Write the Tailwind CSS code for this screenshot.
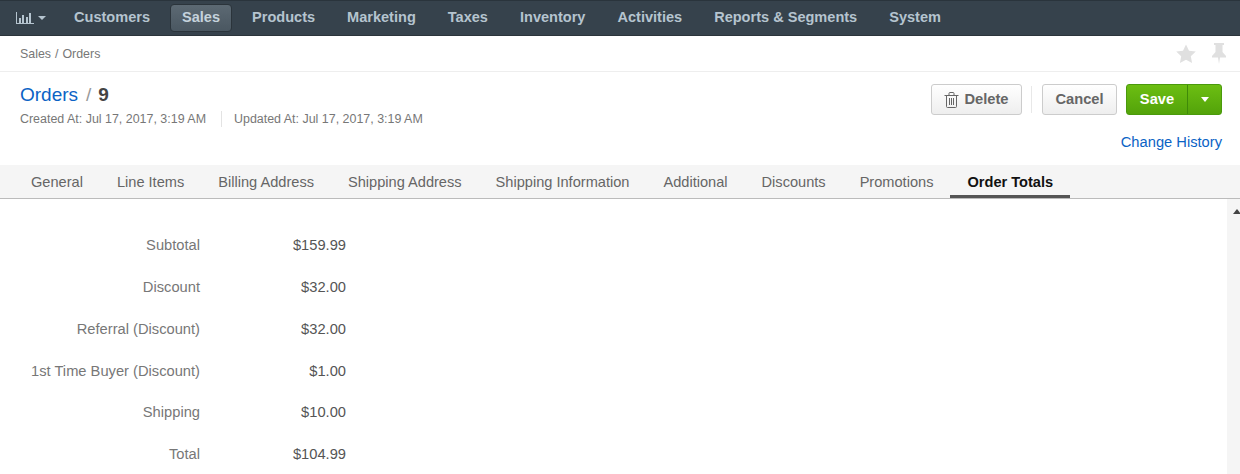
<!DOCTYPE html>
<html lang="en">

<head>
  <meta charset="UTF-8">
  <title>Orders / 9</title>
  <script src="https://cdn.jsdelivr.net/npm/@tailwindcss/browser@4"></script>
</head>

<body class="bg-white h-screen overflow-hidden font-['Liberation_Sans',Arial,sans-serif] text-[#333]">
  <!-- top nav -->
  <nav class="flex items-center h-[36px] pl-[6px] pb-[1px] bg-[#36424c] border-t border-t-[#2a343c] border-b border-b-[#2b343b] text-[14.550px] font-bold text-[#b5c4cf]">
    <a class="flex items-center gap-[4px] w-[56px] pl-[10px]">
      <svg width="18" height="12" viewBox="0 0 18 12" fill="#b5c4cf">
        <path d="M0 0h1v11h17v1H0z" />
        <path d="M3 6h2v5H3zM6 3h2v8H6zM10 5h2v6h-2zM13 1h2v10h-2z" />
      </svg>
      <span class="w-0 h-0 border-x-[4px] border-x-transparent border-t-[4px] border-t-[#b5c4cf]"></span>
    </a>
    <div class="flex items-center gap-[8px]">
      <a class="px-[12px]">Customers</a>
      <a class="px-[11px] mt-[1px] h-[28px] leading-[25px] rounded-[4px] text-[#c5d2dc] bg-gradient-to-b from-[#5c6973] to-[#4a5761] border border-[#2b343b]">Sales</a>
      <a class="px-[12px]">Products</a>
      <a class="px-[12px]">Marketing</a>
      <a class="px-[12px]">Taxes</a>
      <a class="px-[12px]">Inventory</a>
      <a class="px-[12px]">Activities</a>
      <a class="px-[12px]">Reports &amp; Segments</a>
      <a class="px-[12px]">System</a>
    </div>
  </nav>

  <!-- breadcrumbs -->
  <div class="flex items-center justify-between h-[36px] pl-[20px] pr-[14px] border-b border-[#eeeeee] text-[12.400px] text-[#777]">
    <div class="flex gap-[4px] pt-[2px]">
      <span>Sales</span>
      <span>/</span>
      <span>Orders</span>
    </div>
    <div class="flex items-center gap-[16px]">
      <svg width="20" height="20" viewBox="0 0 20 20" fill="#e0e0e0">
        <path d="M10 .5l3 6.200 6.800.9-5 4.700 1.300 6.700-6.100-3.300L3.900 19l1.300-6.700-5-4.700 6.800-.9z" />
      </svg>
      <svg width="14" height="21" viewBox="0 0 14 21" fill="#e0e0e0">
        <path d="M2 0h10v2h-1.500v7L14 13v1.500H8L7 21l-1-6.500H0V13l3.500-4V2H2z" />
      </svg>
    </div>
  </div>

  <!-- title bar -->
  <div class="flex justify-between h-[93px] pl-[20px] pr-[18px]">
    <div class="pt-[11px]">
      <div class="flex items-center h-[24px] text-[19px]">
        <a class="text-[#0b63c5]">Orders</a>
        <span class="ml-[8px] text-[#999]">/</span>
        <span class="ml-[7px] font-bold text-[#444]">9</span>
      </div>
      <div class="flex items-center mt-[3px] text-[12.450px] text-[#777]">
        <span>Created At: Jul 17, 2017, 3:19 AM</span>
        <span class="ml-[15px] mr-[12px] h-[16px] border-l border-[#e3e3e3]"></span>
        <span>Updated At: Jul 17, 2017, 3:19 AM</span>
      </div>
    </div>
    <div class="flex flex-col items-end pt-[12px]">
      <div class="flex items-center">
        <button class="flex items-center gap-[5px] h-[31px] w-[91px] justify-center rounded-[3px] border border-[#cccccc] bg-gradient-to-b from-white to-[#eeeeee] text-[14.700px] font-bold text-[#666]">
          <svg width="15" height="16" viewBox="0 0 15 16" fill="none" stroke="#666" stroke-width="1">
            <path d="M.5 3.500h14M2.500 3.500v11a1 1 0 0 0 1 1h8a1 1 0 0 0 1-1v-11M5 3.500V1.500a1 1 0 0 1 1-1h3a1 1 0 0 1 1 1v2M5.500 6v7M7.500 6v7M9.500 6v7" />
          </svg>
          Delete
        </button>
        <span class="ml-[9px] mr-[10px] h-[27px] border-l border-[#e8e8e8]"></span>
        <button class="h-[31px] w-[75px] rounded-[3px] border border-[#cccccc] bg-gradient-to-b from-white to-[#eeeeee] text-[14.700px] font-bold text-[#666]">Cancel</button>
        <div class="flex ml-[9px] h-[31px] rounded-[3px] border border-[#4a9a0c] bg-gradient-to-b from-[#6cbe12] to-[#53a30a] text-[14.700px] font-bold text-white">
          <button class="w-[60px] h-full">Save</button>
          <button class="flex items-center justify-center w-[34px] h-full border-l border-[#3f8a09]">
            <span class="w-0 h-0 border-x-[4.500px] border-x-transparent border-t-[5px] border-t-white"></span>
          </button>
        </div>
      </div>
      <a class="mt-[16px] text-[14.700px] text-[#0b63c5]">Change History</a>
    </div>
  </div>

  <!-- tabs -->
  <div class="flex h-[34px] pl-[14px] bg-[#f5f5f5] border-b border-[#bbbbbb] text-[14.600px] text-[#666]">
    <a class="flex items-center h-[33px] pt-[5px] px-[17px] border-b-[3px] border-transparent">General</a>
    <a class="flex items-center h-[33px] pt-[5px] px-[17px] border-b-[3px] border-transparent">Line Items</a>
    <a class="flex items-center h-[33px] pt-[5px] px-[17px] border-b-[3px] border-transparent">Billing Address</a>
    <a class="flex items-center h-[33px] pt-[5px] px-[17px] border-b-[3px] border-transparent">Shipping Address</a>
    <a class="flex items-center h-[33px] pt-[5px] px-[17px] border-b-[3px] border-transparent">Shipping Information</a>
    <a class="flex items-center h-[33px] pt-[5px] px-[17px] border-b-[3px] border-transparent">Additional</a>
    <a class="flex items-center h-[33px] pt-[5px] px-[17px] border-b-[3px] border-transparent">Discounts</a>
    <a class="flex items-center h-[33px] pt-[5px] px-[17px] border-b-[3px] border-transparent">Promotions</a>
    <a class="flex items-center h-[33px] pt-[5px] px-[17px] font-bold text-[#111] border-b-[3px] border-[#555]">Order Totals</a>
  </div>

  <!-- content -->
  <div class="flex h-[275px]">
    <div class="flex-1 pt-[25.300px] text-[14.700px]">
      <div class="flex items-center h-[41.800px]">
        <span class="w-[200px] text-right text-[#777]">Subtotal</span>
        <span class="w-[146px] text-right text-[#555]">$159.99</span>
      </div>
      <div class="flex items-center h-[41.800px]">
        <span class="w-[200px] text-right text-[#777]">Discount</span>
        <span class="w-[146px] text-right text-[#555]">$32.00</span>
      </div>
      <div class="flex items-center h-[41.800px]">
        <span class="w-[200px] text-right text-[#777]">Referral (Discount)</span>
        <span class="w-[146px] text-right text-[#555]">$32.00</span>
      </div>
      <div class="flex items-center h-[41.800px]">
        <span class="w-[200px] text-right text-[#777]">1st Time Buyer (Discount)</span>
        <span class="w-[146px] text-right text-[#555]">$1.00</span>
      </div>
      <div class="flex items-center h-[41.800px]">
        <span class="w-[200px] text-right text-[#777]">Shipping</span>
        <span class="w-[146px] text-right text-[#555]">$10.00</span>
      </div>
      <div class="flex items-center h-[41.800px]">
        <span class="w-[200px] text-right text-[#777]">Total</span>
        <span class="w-[146px] text-right text-[#555]">$104.99</span>
      </div>
    </div>
    <!-- scrollbar -->
    <div class="w-[13px] bg-[#f5f5f5] pt-[10px] pl-[6px]">
      <div class="w-0 h-0 border-x-[4px] border-x-transparent border-b-[5px] border-b-[#444]"></div>
    </div>
  </div>
</body>

</html>
